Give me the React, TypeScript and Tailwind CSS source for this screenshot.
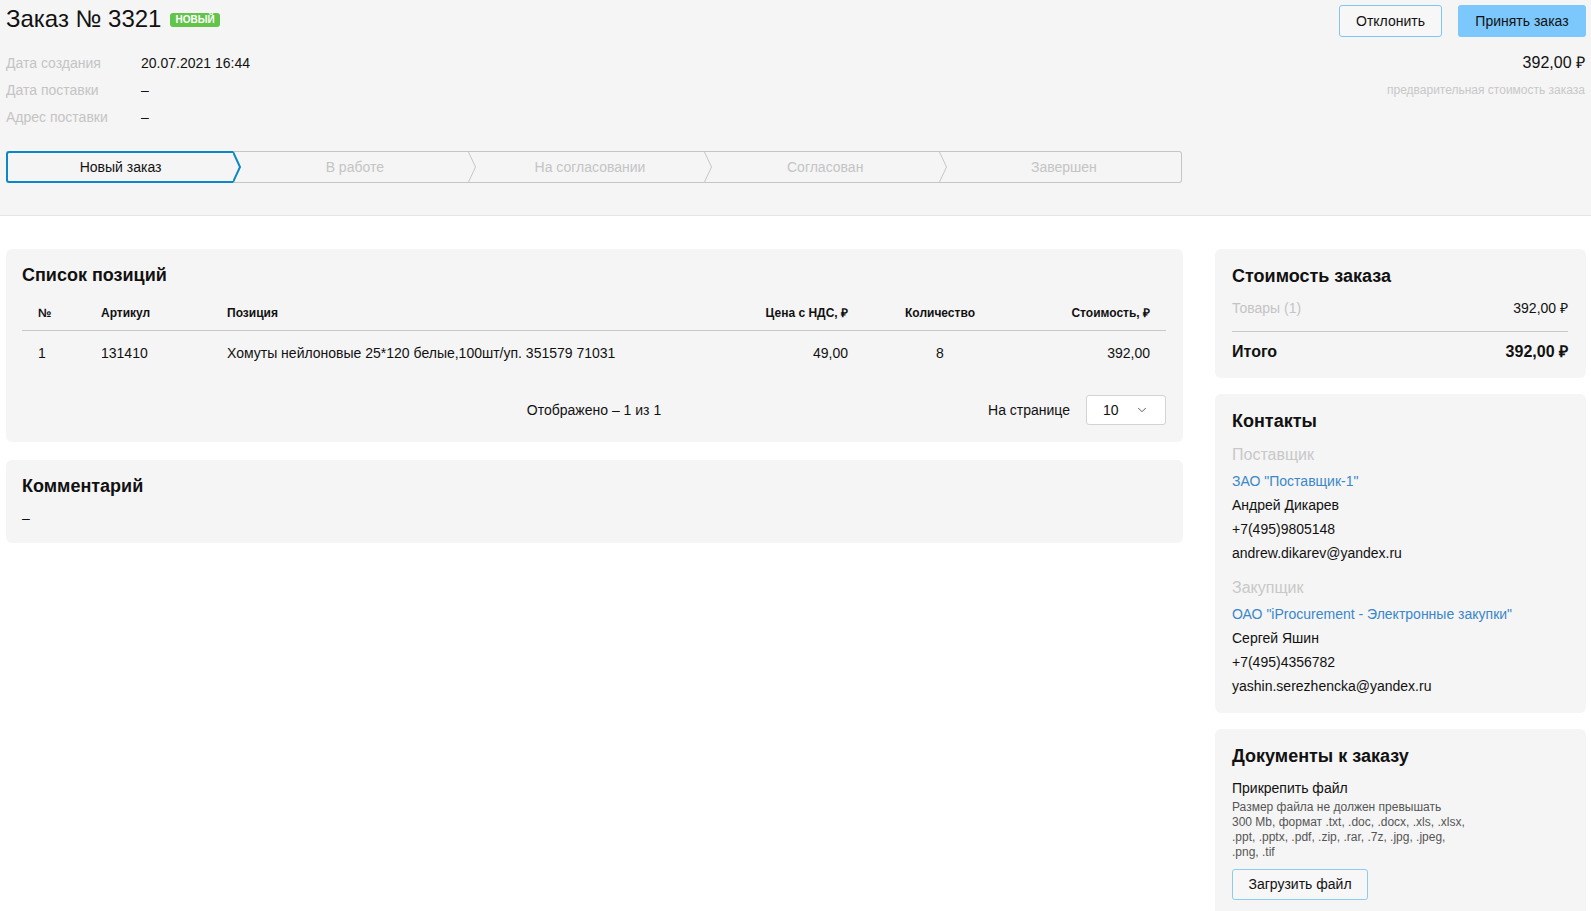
import React from "react";
import { ChevronDown } from "lucide-react";

const steps = ["Новый заказ", "В работе", "На согласовании", "Согласован", "Завершен"];

function Chevron({ active }: { active?: boolean }) {
  return (
    <svg width="8" height="32" viewBox="0 0 8 32" className="shrink-0 block">
      <line x1="0" y1="0.5" x2="8" y2="0.5" stroke="#c6c6c6" strokeWidth="1" />
      <line x1="0" y1="31.5" x2="8" y2="31.5" stroke="#c6c6c6" strokeWidth="1" />
      {active ? (
        <polyline points="0,1 7,16 0,31" fill="#f5f5f5" stroke="#0a87c9" strokeWidth="2" />
      ) : (
        <polyline points="0,0 7.5,16 0,32" fill="none" stroke="#c6c6c6" strokeWidth="1" />
      )}
    </svg>
  );
}

function Stepper() {
  return (
    <div className="flex w-[1176px] h-[32px] mt-[20px]">
      {steps.map((s, i) => {
        const first = i === 0;
        const last = i === steps.length - 1;
        return (
          <div key={s} className="flex flex-1 h-[32px]">
            <div
              className={
                first
                  ? "flex-1 flex items-center justify-center border-2 border-r-0 border-[#0a87c9] rounded-l-[3px] text-[14px] text-[#111]"
                  : last
                  ? "flex-1 flex items-center justify-center border border-l-0 border-[#c6c6c6] rounded-r-[3px] text-[14px] text-[#c4c4c4]"
                  : "flex-1 flex items-center justify-center border-y border-[#c6c6c6] text-[14px] text-[#c4c4c4]"
              }
            >
              {s}
            </div>
            {!last && <Chevron active={first} />}
          </div>
        );
      })}
    </div>
  );
}

function InfoRow({ label, value }: { label: string; value: string }) {
  return (
    <div className="flex items-center h-[27px] text-[14px]">
      <span className="w-[135px] text-[#c4c4c4]">{label}</span>
      <span className="text-[#111]">{value}</span>
    </div>
  );
}

function Card({ children, className }: { children: React.ReactNode; className?: string }) {
  return <div className={"bg-[#f5f5f5] rounded-[6px] " + (className ?? "")}>{children}</div>;
}

function CardTitle({ children }: { children: React.ReactNode }) {
  return <h3 className="text-[18px] leading-[20px] font-bold text-[#111]">{children}</h3>;
}

export default function App() {
  return (
    <div className="min-h-screen bg-white font-['Liberation_Sans',Arial,sans-serif] text-[#111]">
      <header className="bg-[#f5f5f5] border-b border-[#e6e6e6] pl-[6px] pr-[5px] pt-[5px] pb-[32px]">
        <div className="grid grid-cols-[1177px_371px] gap-x-[32px]">
          <div>
            <div className="flex items-start">
              <h1 className="text-[24px] leading-[28px] text-[#111]">Заказ № 3321</h1>
              <span className="ml-[9px] mt-[8px] h-[14px] px-[5px] rounded-[3px] bg-[#62c449] text-white text-[10px] leading-[14px] font-bold">
                НОВЫЙ
              </span>
            </div>
            <div className="mt-[17px]">
              <InfoRow label="Дата создания" value="20.07.2021 16:44" />
              <InfoRow label="Дата поставки" value="–" />
              <InfoRow label="Адрес поставки" value="–" />
            </div>
            <Stepper />
          </div>
          <div className="flex flex-col items-end">
            <div className="flex gap-4">
              <button className="h-[32px] w-[103px] rounded-[3px] border border-[#80c6f5] bg-[#f7f7f7] text-[14px] text-[#111]">
                Отклонить
              </button>
              <button className="h-[32px] w-[128px] rounded-[3px] bg-[#7cc7fb] text-[14px] text-[#111]">
                Принять заказ
              </button>
            </div>
            <div className="mt-[17px] pr-[1px] text-[16px] leading-[18px] text-[#111]">392,00 ₽</div>
            <div className="mt-[11px] pr-[1px] text-[12px] leading-[14px] text-[#c8c8c8]">
              предварительная стоимость заказа
            </div>
          </div>
        </div>
      </header>

      <main className="pl-[6px] pr-[5px] pt-[33px] grid grid-cols-[1177px_371px] gap-x-[32px] items-start">
        <div className="flex flex-col gap-[18px]">
          <Card className="pl-4 pr-[17px] pt-4 pb-[17px]">
            <CardTitle>Список позиций</CardTitle>
            <table className="mt-[21px] w-full table-fixed text-left">
              <colgroup>
                <col className="w-[63px]" />
                <col className="w-[126px]" />
                <col className="w-[503px]" />
                <col className="w-[150px]" />
                <col className="w-[152px]" />
                <col className="w-[150px]" />
              </colgroup>
              <thead>
                <tr className="border-b border-[#c8c8c8] text-[12px] leading-[15px] font-bold">
                  <th className="px-4 pb-[9px]">№</th>
                  <th className="px-4 pb-[9px]">Артикул</th>
                  <th className="px-4 pb-[9px]">Позиция</th>
                  <th className="px-4 pb-[9px] text-right">Цена с НДС, ₽</th>
                  <th className="px-4 pb-[9px] text-center">Количество</th>
                  <th className="px-4 pb-[9px] text-right">Стоимость, ₽</th>
                </tr>
              </thead>
              <tbody>
                <tr className="text-[14px] leading-[16px]">
                  <td className="px-4 pt-[14px] pb-[14px]">1</td>
                  <td className="px-4 pt-[14px] pb-[14px]">131410</td>
                  <td className="px-4 pt-[14px] pb-[14px] whitespace-nowrap">
                    Хомуты нейлоновые 25*120 белые,100шт/уп. 351579 71031
                  </td>
                  <td className="px-4 pt-[14px] pb-[14px] text-right">49,00</td>
                  <td className="px-4 pt-[14px] pb-[14px] text-center">8</td>
                  <td className="px-4 pt-[14px] pb-[14px] text-right">392,00</td>
                </tr>
              </tbody>
            </table>
            <div className="relative mt-[20px] h-[30px] flex items-center justify-end text-[14px]">
              <span className="absolute left-1/2 -translate-x-1/2">Отображено – 1 из 1</span>
              <div className="flex items-center gap-4">
                <span>На странице</span>
                <div className="w-[80px] h-[30px] bg-white border border-[#d3d3d3] rounded-[3px] flex items-center justify-between pl-4 pr-[16px]">
                  <span>10</span>
                  <ChevronDown size={14} strokeWidth={1.5} className="text-[#444]" />
                </div>
              </div>
            </div>
          </Card>

          <Card className="pl-4 pr-[17px] pt-4 pb-[17px]">
            <CardTitle>Комментарий</CardTitle>
            <div className="mt-[14px] text-[14px] leading-[16px]">–</div>
          </Card>
        </div>

        <div className="flex flex-col gap-[16px]">
          <Card className="pl-[17px] pr-[18px] pt-[17px] pb-[17px]">
            <CardTitle>Стоимость заказа</CardTitle>
            <div className="mt-[14px] flex justify-between text-[14px] leading-[16px] pb-[15px] border-b border-[#c8c8c8]">
              <span className="text-[#c4c4c4]">Товары (1)</span>
              <span>392,00 ₽</span>
            </div>
            <div className="pt-[11px] flex justify-between text-[16px] leading-[18px] font-bold">
              <span>Итого</span>
              <span>392,00 ₽</span>
            </div>
          </Card>

          <Card className="pl-[17px] pr-[18px] pt-[17px] pb-[15px]">
            <CardTitle>Контакты</CardTitle>
            <div className="mt-[12px] text-[16px] leading-[24px] text-[#c8c8c8]">Поставщик</div>
            <div className="mt-[2px] text-[14px] leading-[24px]">
              <div className="text-[#3a87c9]">ЗАО "Поставщик-1"</div>
              <div>Андрей Дикарев</div>
              <div>+7(495)9805148</div>
              <div>andrew.dikarev@yandex.ru</div>
            </div>
            <div className="mt-[11px] text-[16px] leading-[24px] text-[#c8c8c8]">Закупщик</div>
            <div className="mt-[2px] text-[14px] leading-[24px]">
              <div className="text-[#3a87c9]">ОАО "iProcurement - Электронные закупки"</div>
              <div>Сергей Яшин</div>
              <div>+7(495)4356782</div>
              <div>yashin.serezhencka@yandex.ru</div>
            </div>
          </Card>

          <Card className="pl-[17px] pr-[18px] pt-[17px] pb-[20px]">
            <CardTitle>Документы к заказу</CardTitle>
            <div className="mt-[14px] text-[14px] leading-[16px]">Прикрепить файл</div>
            <p className="mt-[4px] text-[12px] leading-[15px] text-[#555]">
              Размер файла не должен превышать
              <br />
              300 Mb, формат .txt, .doc, .docx, .xls, .xlsx,
              <br />
              .ppt, .pptx, .pdf, .zip, .rar, .7z, .jpg, .jpeg,
              <br />
              .png, .tif
            </p>
            <button className="mt-[9px] h-[31px] w-[136px] rounded-[3px] border border-[#8ccbf5] bg-[#f7f7f7] text-[14px] text-[#111]">
              Загрузить файл
            </button>
          </Card>
        </div>
      </main>
    </div>
  );
}
